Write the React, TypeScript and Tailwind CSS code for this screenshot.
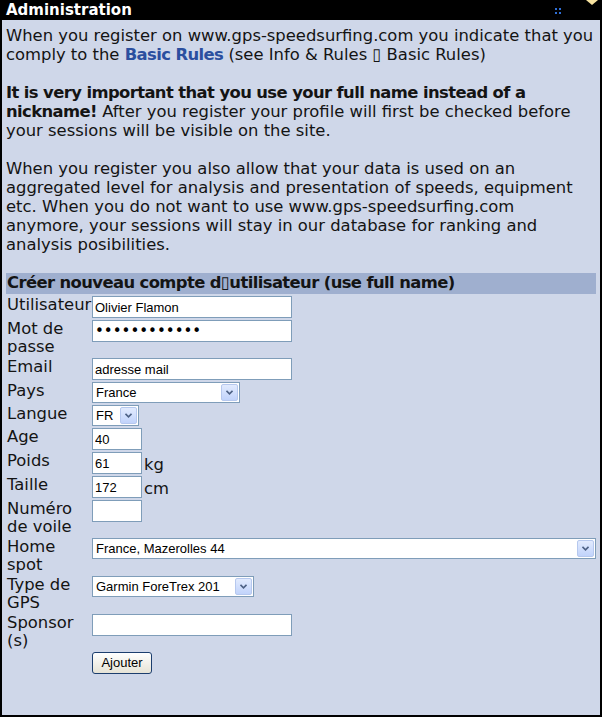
import React from "react";

const font = "font-['DejaVu_Sans',Verdana,sans-serif]";
const inputFont = "font-['Liberation_Sans',Arial,sans-serif]";

const inputCls = `h-[22px] border border-[#7f9db9] bg-white px-[2px] text-[13px] text-black outline-none ${inputFont}`;

const Arrow = () => (
  <span className="pointer-events-none absolute right-[2px] top-[2px] bottom-[2px] flex w-[17px] items-center justify-center rounded-[2px] border border-[#b6c8ee] bg-gradient-to-b from-[#e2ebfe] to-[#c1d3fb]">
    <svg width="7" height="5" viewBox="0 0 7 5">
      <path d="M0.5 0.8 L3.5 3.8 L6.5 0.8" fill="none" stroke="#4d6185" strokeWidth="1.6" />
    </svg>
  </span>
);

const Select = ({ value, width, options }: { value: string; width: string; options: string[] }) => (
  <div className={`relative ${width}`}>
    <select
      defaultValue={value}
      className={`block h-[21px] w-full appearance-none border border-[#7f9db9] bg-white pl-[3px] text-[13px] text-black outline-none ${inputFont}`}
    >
      {options.map((o) => (
        <option key={o}>{o}</option>
      ))}
    </select>
    <Arrow />
  </div>
);

const Row = ({ label, children }: { label: React.ReactNode; children: React.ReactNode }) => (
  <div className="flex items-start">
    <div className="w-[86px] shrink-0 pl-[1px] text-[16.4px] leading-[18px]">{label}</div>
    <div className="flex min-w-0 flex-1 items-end gap-[2px]">{children}</div>
  </div>
);

export default function App() {
  return (
    <div className={`w-[602px] h-[717px] bg-[#cfd7e9] text-[#141414] ${font}`}>
      <div className="relative flex h-[20px] items-center bg-black pl-[6px]">
        <span className="text-[15px] font-bold leading-[20px] text-white">Administration</span>
        <svg className="absolute left-[555px] top-[8px]" width="6" height="6" viewBox="0 0 6 6">
          <rect x="0" y="0" width="2" height="2" fill="#2f6fd6" />
          <rect x="4" y="0" width="2" height="2" fill="#2f6fd6" />
          <rect x="0" y="4" width="2" height="2" fill="#2f6fd6" />
          <rect x="4" y="4" width="2" height="2" fill="#2f6fd6" />
        </svg>
        <svg className="absolute left-[585px] top-0" width="14" height="6" viewBox="0 0 14 6">
          <path d="M1 0 L13 0 L7 5 Z" fill="#f7e3a0" />
        </svg>
      </div>
      <div className="h-[697px] border-x-2 border-b-2 border-black pl-[4px] pr-[3px] pt-[6px]">
        <div className="text-[16.4px] leading-[19px]">
          <p>
            When you register on www.gps-speedsurfing.com you indicate that you comply to the{" "}
            <a className="font-bold tracking-[-0.6px] text-[#2b4f9f]">Basic Rules</a> (see Info &amp; Rules ▯ Basic
            Rules)
          </p>
          <p className="mt-[19px]">
            <b className="tracking-[-0.6px]">It is very important that you use your full name instead of a nickname!</b>{" "}
            After you register your profile will first be checked before your sessions will be visible on the site.
          </p>
          <p className="mt-[19px]">
            When you register you also allow that your data is used on an aggregated level for analysis and
            presentation of speeds, equipment etc. When you do not want to use www.gps-speedsurfing.com anymore, your
            sessions will stay in our database for ranking and analysis posibilities.
          </p>
        </div>

        <div className="mt-[19px] mr-[1px] flex h-[21px] items-center bg-[#9fafcf] pl-[1px] text-[16.4px] font-bold tracking-[-0.6px]">
          Créer nouveau compte d▯utilisateur (use full name)
        </div>

        <div className="mt-[2px] flex flex-col gap-[2px]">
          <Row label="Utilisateur">
            <input className={`${inputCls} w-[200px]`} defaultValue="Olivier Flamon" />
          </Row>
          <Row label={<>Mot de<br />passe</>}>
            <input
              type="password"
              className={`h-[22px] w-[200px] border border-[#7f9db9] bg-white px-[2px] text-[15px] text-black outline-none ${font}`}
              defaultValue="olivierflamo"
            />
          </Row>
          <Row label="Email">
            <input className={`${inputCls} w-[200px]`} defaultValue="adresse mail" />
          </Row>
          <Row label="Pays">
            <Select value="France" width="w-[148px]" options={["France", "Belgique", "Nederland"]} />
          </Row>
          <Row label="Langue">
            <Select value="FR" width="w-[47px]" options={["FR", "EN", "NL"]} />
          </Row>
          <Row label="Age">
            <input className={`${inputCls} w-[50px]`} defaultValue="40" />
          </Row>
          <Row label="Poids">
            <input className={`${inputCls} w-[50px]`} defaultValue="61" />
            <span className="text-[16.4px] leading-[18px]">kg</span>
          </Row>
          <Row label="Taille">
            <input className={`${inputCls} w-[50px]`} defaultValue="172" />
            <span className="text-[16.4px] leading-[18px]">cm</span>
          </Row>
          <Row label={<>Numéro<br />de voile</>}>
            <input className={`${inputCls} w-[50px]`} defaultValue="" />
          </Row>
          <Row label={<>Home<br />spot</>}>
            <Select value="France, Mazerolles 44" width="w-[504px]" options={["France, Mazerolles 44", "France, Leucate"]} />
          </Row>
          <Row label={<>Type de<br />GPS</>}>
            <Select value="Garmin ForeTrex 201" width="w-[162px]" options={["Garmin ForeTrex 201", "Locosys GT-31"]} />
          </Row>
          <Row label={<>Sponsor<br />(s)</>}>
            <input className={`${inputCls} w-[200px]`} defaultValue="" />
          </Row>
          <Row label="">
            <button
              className={`h-[22px] w-[60px] rounded-[3px] border border-[#1c3e6e] bg-gradient-to-b from-white to-[#e6e3d6] text-[13px] text-black ${inputFont}`}
            >
              Ajouter
            </button>
          </Row>
        </div>
      </div>
    </div>
  );
}
